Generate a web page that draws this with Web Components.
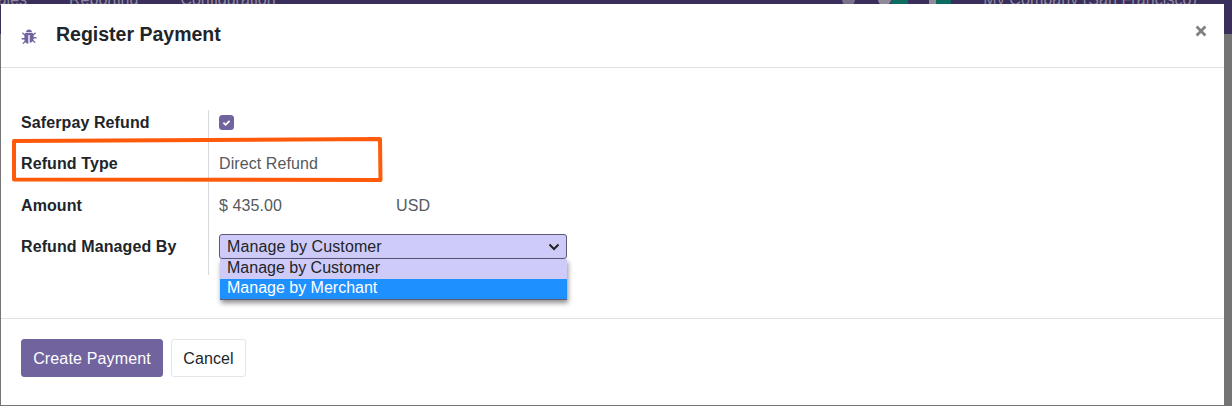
<!DOCTYPE html>
<html>
<head>
<meta charset="utf-8">
<style>
    html, body { margin: 0; height: 100%; overflow: hidden; background: #747474; }
    body { font-family: "Liberation Sans", Arial, sans-serif; }
</style>
</head>
<body>
<app-backdrop>
    <register-dialog title-text="Register Payment">
        <form-row label="Saferpay Refund" height="41"><check-box></check-box></form-row>
        <form-row label="Refund Type" height="42"><span>Direct Refund</span></form-row>
        <form-row label="Amount" height="41"><amount-value value="$ 435.00" currency="USD"></amount-value></form-row>
        <form-row label="Refund Managed By" height="41"><managed-select></managed-select></form-row>
    </register-dialog>
    <highlight-box></highlight-box>
</app-backdrop>

<script>
class AppBackdrop extends HTMLElement {
    constructor() {
        super();
        this.attachShadow({ mode: 'open' });
        this.shadowRoot.innerHTML = `
            <style>
                :host { display: block; position: relative; width: 1232px; height: 406px; overflow: hidden; }
                .nav {
                    height: 44px;
                    margin-top: -10px;
                    background: #3a2e5c;
                    color: #8f8a9f;
                    font-size: 16px;
                    display: flex;
                    align-items: flex-start;
                }
                .nav span { line-height: 20px; white-space: nowrap; }
                .left { display: flex; gap: 42px; margin-left: -13px; }
                .right { display: flex; align-items: flex-start; margin-left: auto; margin-right: 35px; }
                .company { margin-left: 32px; letter-spacing: .08px; }
                .dot { height: 16px; margin-top: 0; }
                .a { width: 13px; background: #77728a; border-radius: 0 0 6px 6px; margin-right: 23px; }
                .b { width: 13px; background: #8e8a98; border-radius: 7px; }
                .c { width: 17px; background: #0d6b5f; border-radius: 4px; margin-right: 21px; }
                .d { width: 7px; background: #8e8a98; }
                .e { width: 15px; background: #0d6b5f; border-radius: 4px; }
                .modal { position: absolute; left: 1px; top: 4px; width: 1223px; height: 401px; }
            </style>
            <div class="nav">
                <div class="left"><span>Sales</span><span>Reporting</span><span>Configuration</span></div>
                <div class="right">
                    <i class="dot a"></i><i class="dot b"></i><i class="dot c"></i><i class="dot d"></i><i class="dot e"></i>
                    <span class="company">My Company (San Francisco)</span>
                </div>
            </div>
            <div class="modal"><slot></slot></div>
        `;
    }
}

class RegisterDialog extends HTMLElement {
    constructor() {
        super();
        this.attachShadow({ mode: 'open' });
    }

    connectedCallback() {
        const title = this.getAttribute('title-text');
        this.shadowRoot.innerHTML = `
            <style>
                :host {
                    display: flex;
                    flex-direction: column;
                    height: 100%;
                    background: #fff;
                    color: #212529;
                    font-size: 16px;
                }
                header {
                    height: 64px;
                    flex: none;
                    box-sizing: border-box;
                    border-bottom: 1px solid #dee2e6;
                    display: flex;
                    align-items: center;
                    padding: 0 20px;
                }
                svg.bug { width: 16px; height: 16px; flex: none; }
                h4 {
                    margin: 0 0 3px 19px;
                    font-size: 19.5px;
                    font-weight: 700;
                    flex: 1;
                }
                .close { width: 12px; height: 12px; margin: 0 -3px 9px 0; }
                main { flex: 1; padding: 42px 20px 0; }
                footer {
                    height: 87px;
                    flex: none;
                    box-sizing: border-box;
                    border-top: 1px solid #dee2e6;
                    display: flex;
                    align-items: flex-start;
                    gap: 8px;
                    padding: 20px 20px 0;
                }
                button {
                    font: inherit;
                    height: 38px;
                    border-radius: 3px;
                    padding: 1px 0 0;
                    box-sizing: border-box;
                }
                .primary { width: 142px; background: #71639e; border: 1px solid #71639e; color: #fff; letter-spacing: .15px; }
                .cancel { width: 75px; background: #fff; border: 1px solid #e3e5e8; color: #212529; letter-spacing: .1px; }
            </style>
            <header>
                <svg class="bug" viewBox="0 0 16 16">
                    <path fill="#71639e" d="M5 4.2C5 2.6 6.3 1.4 8 1.4s3 1.2 3 2.8zM4.600 5h6.800c.5 0 .9.4 1 .9l1.700-1.600.9.9-2.400 2.300v1.600h2.800v1.300h-2.800c0 .6-.1 1.100-.3 1.600l2.300 2.200-.9.9-2-1.900c-.8.9-1.900 1.500-3 1.600V7h-1.400v8.800c-1.100-.1-2.200-.7-3-1.600l-2 1.900-.9-.9 2.300-2.200c-.2-.5-.3-1-.3-1.600H.6v-1.300h2.800V7.500L1 5.200l.9-.9 1.700 1.600c.1-.5.5-.9 1-.9z"/>
                </svg>
                <h4>${title}</h4>
                <svg class="close" viewBox="0 0 12 12"><path d="M1.600 1.600l8.800 8.800M10.400 1.600l-8.800 8.800" stroke="#808080" stroke-width="2.800" fill="none"/></svg>
            </header>
            <main><slot></slot></main>
            <footer>
                <button class="primary">Create Payment</button>
                <button class="cancel">Cancel</button>
            </footer>
        `;
    }
}

class FormRow extends HTMLElement {
    constructor() {
        super();
        this.attachShadow({ mode: 'open' });
    }

    connectedCallback() {
        this.shadowRoot.innerHTML = `
            <style>
                :host { display: grid; grid-template-columns: 187px 1fr; height: ${this.getAttribute('height')}px; line-height: 26px; }
                .label { font-weight: 700; letter-spacing: .1px; }
                .value {
                    border-left: 1px solid #d8dadd;
                    padding-left: 10px;
                    color: #555a60;
                    letter-spacing: .08px;
                }
            </style>
            <div class="label">${this.getAttribute('label')}</div>
            <div class="value"><slot></slot></div>
        `;
    }
}

class CheckBox extends HTMLElement {
    constructor() {
        super();
        this.attachShadow({ mode: 'open' });
        this.shadowRoot.innerHTML = `
            <style>
                :host { display: block; width: 15px; height: 15px; margin-top: 5px; border-radius: 3.500px; background: #71639e; }
                svg { display: block; width: 15px; height: 15px; }
            </style>
            <svg viewBox="0 0 15 15"><path d="M4.400 7.600l2.200 2.200 4-4" stroke="#fff" stroke-width="1.800" fill="none"/></svg>
        `;
    }
}

class AmountValue extends HTMLElement {
    constructor() {
        super();
        this.attachShadow({ mode: 'open' });
    }

    connectedCallback() {
        this.shadowRoot.innerHTML = `
            <style>
                :host { display: flex; }
                .v { width: 177px; }
            </style>
            <span class="v">${this.getAttribute('value')}</span>
            <span>${this.getAttribute('currency')}</span>
        `;
    }
}

class ManagedSelect extends HTMLElement {
    constructor() {
        super();
        this.attachShadow({ mode: 'open' });
        this.shadowRoot.innerHTML = `
            <style>
                :host { display: block; position: relative; width: 348px; height: 25px; color: #212529; line-height: 24px; }
                .box {
                    height: 25px;
                    box-sizing: border-box;
                    background: #cfcbf8;
                    border: 1px solid #5d5a78;
                    border-radius: 3px;
                    display: flex;
                    align-items: center;
                    justify-content: space-between;
                    padding: 0 6px 0 7px;
                    letter-spacing: .1px;
                }
                svg { width: 12px; height: 8px; }
                .menu {
                    position: absolute;
                    left: 1px;
                    top: 25px;
                    width: 347px;
                    background: #cfcbf8;
                    box-shadow: 1px 3px 5px rgba(0,0,0,.45);
                    border-bottom: 1px solid #5d5a78;
                    letter-spacing: 0;
                }
                .menu div { padding-left: 7px; height: 20px; line-height: 18px; }
                .menu .on { background: #1e90ff; color: #fff; }
            </style>
            <div class="box">
                <span>Manage by Customer</span>
                <svg viewBox="0 0 12 8"><path d="M1.500 1.500L6 6l4.500-4.500" stroke="#222" stroke-width="2" fill="none"/></svg>
            </div>
            <div class="menu">
                <div>Manage by Customer</div>
                <div class="on">Manage by Merchant</div>
            </div>
        `;
    }
}

class HighlightBox extends HTMLElement {
    constructor() {
        super();
        this.attachShadow({ mode: 'open' });
        this.shadowRoot.innerHTML = `
            <style>
                :host {
                    display: block;
                    position: absolute;
                    left: -1px;
                    top: -4px;
                    width: 1232px;
                    height: 406px;
                    pointer-events: none;
                }
                svg { display: block; }
            </style>
            <svg width="1232" height="406" viewBox="0 0 1232 406">
                <path d="M14 141L380 139L380.500 180L14 179.500Z" fill="none" stroke="#ff5a0a" stroke-width="4" stroke-linejoin="round"/>
            </svg>
        `;
    }
}

customElements.define('app-backdrop', AppBackdrop);
customElements.define('register-dialog', RegisterDialog);
customElements.define('form-row', FormRow);
customElements.define('check-box', CheckBox);
customElements.define('amount-value', AmountValue);
customElements.define('managed-select', ManagedSelect);
customElements.define('highlight-box', HighlightBox);
</script>
</body>
</html>
